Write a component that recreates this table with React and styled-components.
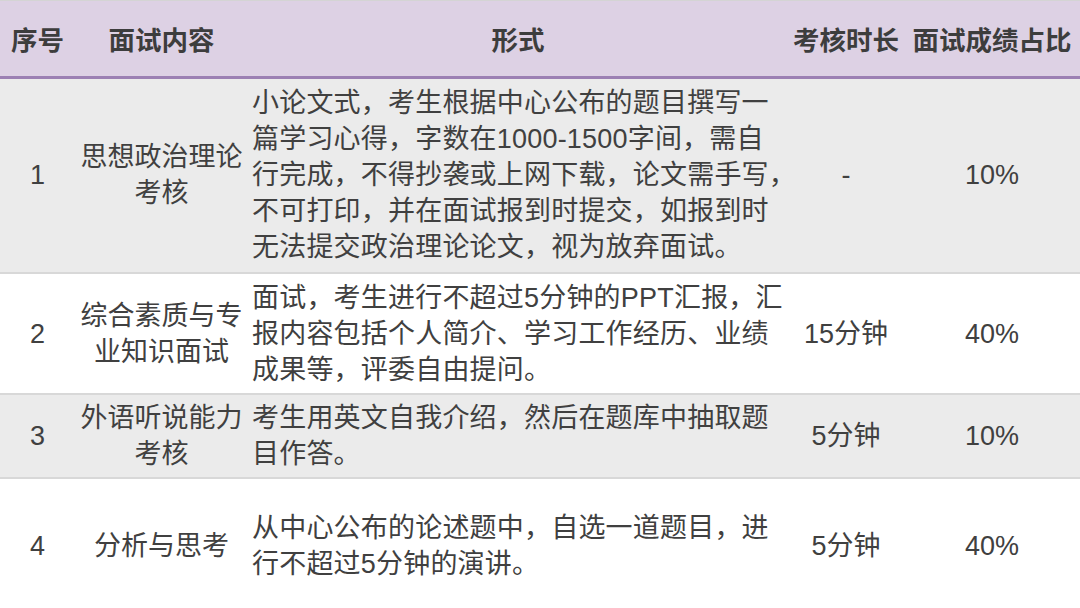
import React from "react";
import styled, { createGlobalStyle } from "styled-components";

const rows = [
  {
    no: "1",
    item: ["思想政治理论", "考核"],
    form: [
      "小论文式，考生根据中心公布的题目撰写一",
      "篇学习心得，字数在1000-1500字间，需自",
      "行完成，不得抄袭或上网下载，论文需手写，",
      "不可打印，并在面试报到时提交，如报到时",
      "无法提交政治理论论文，视为放弃面试。",
    ],
    time: "-",
    ratio: "10%",
    height: 196,
  },
  {
    no: "2",
    item: ["综合素质与专", "业知识面试"],
    form: [
      "面试，考生进行不超过5分钟的PPT汇报，汇",
      "报内容包括个人简介、学习工作经历、业绩",
      "成果等，评委自由提问。",
    ],
    time: "15分钟",
    ratio: "40%",
    height: 121,
  },
  {
    no: "3",
    item: ["外语听说能力", "考核"],
    form: ["考生用英文自我介绍，然后在题库中抽取题", "目作答。"],
    time: "5分钟",
    ratio: "10%",
    height: 84,
  },
  {
    no: "4",
    item: ["分析与思考"],
    form: ["从中心公布的论述题中，自选一道题目，进", "行不超过5分钟的演讲。"],
    time: "5分钟",
    ratio: "40%",
    height: 136,
  },
];

export default function App() {
  return (
    <>
      <GlobalStyle />
      <Page>
        <Table>
          <colgroup>
            <col style={{ width: 75 }} />
            <col style={{ width: 173 }} />
            <col style={{ width: 540 }} />
            <col style={{ width: 116 }} />
            <col style={{ width: 176 }} />
          </colgroup>
          <thead>
            <HeadRow>
              <Th>序号</Th>
              <Th>面试内容</Th>
              <Th>形式</Th>
              <Th>考核时长</Th>
              <Th>面试成绩占比</Th>
            </HeadRow>
          </thead>
          <tbody>
            {rows.map((r, i) => (
              <Row key={r.no} $shade={i % 2 === 0} $h={r.height}>
                <Td>{r.no}</Td>
                <Td>
                  {r.item.map((l) => (
                    <Line key={l}>{l}</Line>
                  ))}
                </Td>
                <FormCell>
                  {r.form.map((l) => (
                    <Line key={l}>{l}</Line>
                  ))}
                </FormCell>
                <Td>{r.time}</Td>
                <Td>{r.ratio}</Td>
              </Row>
            ))}
          </tbody>
        </Table>
      </Page>
    </>
  );
}

const GlobalStyle = createGlobalStyle`
  html, body {
    margin: 0;
    padding: 0;
    background: #ffffff;
  }
  body {
    font-family: "Liberation Sans", "Noto Sans CJK SC", sans-serif;
    color: #3f3f3f;
  }
`;

const Page = styled.div`
  width: 1080px;
  height: 608px;
  overflow: hidden;
  border-top: 1px solid #d4d4d4;
  box-sizing: border-box;
`;

const Table = styled.table`
  width: 1080px;
  border-collapse: collapse;
  table-layout: fixed;
`;

const HeadRow = styled.tr`
  height: 76px;
  background: #ddd1e4;
  border-bottom: 3px solid #9c80b3;
`;

const Th = styled.th`
  padding: 0;
  font-size: 26.5px;
  font-weight: 700;
  color: #3d3d3d;
  text-align: center;
  vertical-align: middle;
  white-space: nowrap;
`;

const Row = styled.tr`
  height: ${({ $h }) => $h}px;
  background: ${({ $shade }) => ($shade ? "#ebebeb" : "#ffffff")};
  border-bottom: 2px solid #d8d8d8;
`;

const Td = styled.td`
  padding: 0 4px;
  font-size: 27px;
  line-height: 36px;
  text-align: center;
  vertical-align: middle;
  white-space: nowrap;
  color: #404040;
`;

const FormCell = styled(Td)`
  text-align: left;
  letter-spacing: 0.2px;
`;

const Line = styled.div`
  display: block;
  height: 36px;
  line-height: 36px;
`;
